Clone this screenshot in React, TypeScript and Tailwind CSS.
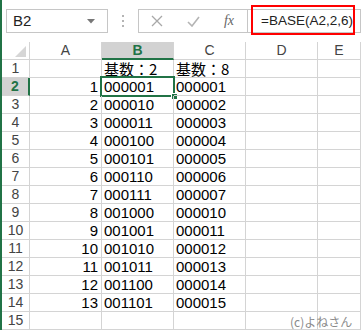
import React from "react";

const numFont = { fontFamily: "'Liberation Sans Narrow', 'Liberation Sans', sans-serif" };
const jpFont = { fontFamily: "'Liberation Sans Narrow', 'Noto Sans CJK JP', sans-serif" };

const rows = Array.from({ length: 13 }, (_, i) => i + 1);
const cols = ["A", "B", "C", "D", "E"];

function pad(n: number, base: number) {
  return n.toString(base).padStart(6, "0");
}

function Cell({
  children,
  align = "left",
  jp = false,
}: {
  children?: React.ReactNode;
  align?: "left" | "right";
  jp?: boolean;
}) {
  return (
    <div
      className={`relative flex border-r border-b border-[#d4d4d4] text-[15px] leading-[17px] text-black ${
        align === "right" ? "justify-end pr-[3px]" : "pl-[2px]"
      }`}
      style={jp ? jpFont : numFont}
    >
      {children !== undefined && <span className="whitespace-nowrap">{children}</span>}
    </div>
  );
}

function RowHead({ n, active = false }: { n: number; active?: boolean }) {
  return (
    <div
      className={`flex justify-center text-[14px] leading-[17px] ${
        active
          ? "border-b border-r-2 border-b-[#d4d4d4] border-r-[#217346] bg-[#d2d2d2] font-bold text-[#217346]"
          : "border-r border-b border-[#d4d4d4] text-[#444]"
      }`}
      style={numFont}
    >
      {n}
    </div>
  );
}

export default function App() {
  return (
    <div className="relative h-[330px] w-[361px] overflow-hidden border-l-2 border-[#217346] bg-white">
      {/* formula bar */}
      <div className="flex h-[42px] pt-[9px]">
        <div className="ml-[4px] flex h-[24px] w-[102px] items-center justify-between border border-[#c6c6c6] pl-[6px] pr-[12px]">
          <span
            className="text-[15px] leading-[16px] text-[#222]"
            style={{ fontFamily: "'Liberation Sans', sans-serif" }}
          >
            B2
          </span>
          <svg width="8" height="5" viewBox="0 0 8 5">
            <path d="M0 0h8L4 4.5z" fill="#777" />
          </svg>
        </div>
        <div className="flex h-[24px] w-[30px] flex-col items-center justify-center gap-[3px]">
          <span className="h-[2px] w-[2px] bg-[#b4b4b4]" />
          <span className="h-[2px] w-[2px] bg-[#b4b4b4]" />
          <span className="h-[2px] w-[2px] bg-[#b4b4b4]" />
        </div>
        <div className="flex h-[24px] w-[110px] items-center border border-[#c6c6c6]">
          <div className="flex w-[36px] justify-center">
            <svg width="12" height="12" viewBox="0 0 12 12">
              <path d="M1 1l10 10M11 1L1 11" stroke="#a8a8a8" strokeWidth="1.3" />
            </svg>
          </div>
          <div className="flex w-[36px] justify-center">
            <svg width="13" height="11" viewBox="0 0 13 11">
              <path d="M1 6l4 4L12 1" stroke="#b4b4b4" strokeWidth="1.6" fill="none" />
            </svg>
          </div>
          <div className="flex w-[36px] justify-center">
            <span
              className="text-[14px] leading-[16px] italic text-[#666]"
              style={{ fontFamily: "'Liberation Serif', serif" }}
            >
              fx
            </span>
          </div>
        </div>
        <div className="flex h-[24px] flex-1 items-center border-y border-r border-[#c6c6c6] pl-[13px]">
          <span
            className="text-[13.5px] leading-[16px] text-[#222]"
            style={{ fontFamily: "'Liberation Sans', sans-serif" }}
          >
            =BASE(A2,2,6)
          </span>
        </div>
      </div>
      {/* annotation */}
      <div className="absolute left-[249px] top-[5px] h-[30px] w-[104px] border-2 border-[#ff0000]" />

      {/* sheet grid */}
      <div className="grid grid-cols-[28px_72px_72px_72px_72px_1fr] grid-rows-[repeat(16,18px)]">
        {/* header row */}
        <div className="flex items-end justify-end border-r border-b border-[#d4d4d4] pb-[2px] pr-[3px]">
          <svg width="11" height="11" viewBox="0 0 11 11">
            <path d="M11 0v11H0z" fill="#d6d6d6" />
          </svg>
        </div>
        {cols.map((c) => (
          <div
            key={c}
            className={`flex justify-center text-[14px] leading-[17px] ${
              c === "B"
                ? "border-r border-b-2 border-r-[#d4d4d4] border-b-[#217346] bg-[#d2d2d2] font-bold text-[#217346]"
                : "border-r border-b border-[#d4d4d4] text-[#444]"
            }`}
            style={numFont}
          >
            {c}
          </div>
        ))}

        {/* row 1 */}
        <RowHead n={1} />
        <Cell />
        <Cell jp>基数：2</Cell>
        <Cell jp>基数：8</Cell>
        <Cell />
        <Cell />

        {rows.map((n) => (
          <React.Fragment key={n}>
            <RowHead n={n + 1} active={n === 1} />
            <Cell align="right">{n}</Cell>
            <div className="relative">
              <Cell>{pad(n, 2)}</Cell>
              {n === 1 && (
                <>
                  <div className="absolute -left-[2px] -top-[2px] -right-[1px] -bottom-[1px] border-2 border-[#217346]" />
                  <div className="absolute -bottom-[4px] -right-[4px] h-[7px] w-[7px] border border-white bg-[#217346]" />
                </>
              )}
            </div>
            <Cell>{pad(n, 8)}</Cell>
            <Cell />
            <Cell />
          </React.Fragment>
        ))}

        {/* row 15 */}
        <RowHead n={15} />
        <Cell />
        <Cell />
        <Cell />
        <Cell />
        <Cell />
      </div>

      {/* watermark */}
      <div
        className="absolute left-[288px] top-[315px] text-[12px] leading-[14px] text-[#8a8a8a]"
        style={{ fontFamily: "'Noto Sans CJK JP', sans-serif" }}
      >
        (c)よねさん
      </div>
    </div>
  );
}
